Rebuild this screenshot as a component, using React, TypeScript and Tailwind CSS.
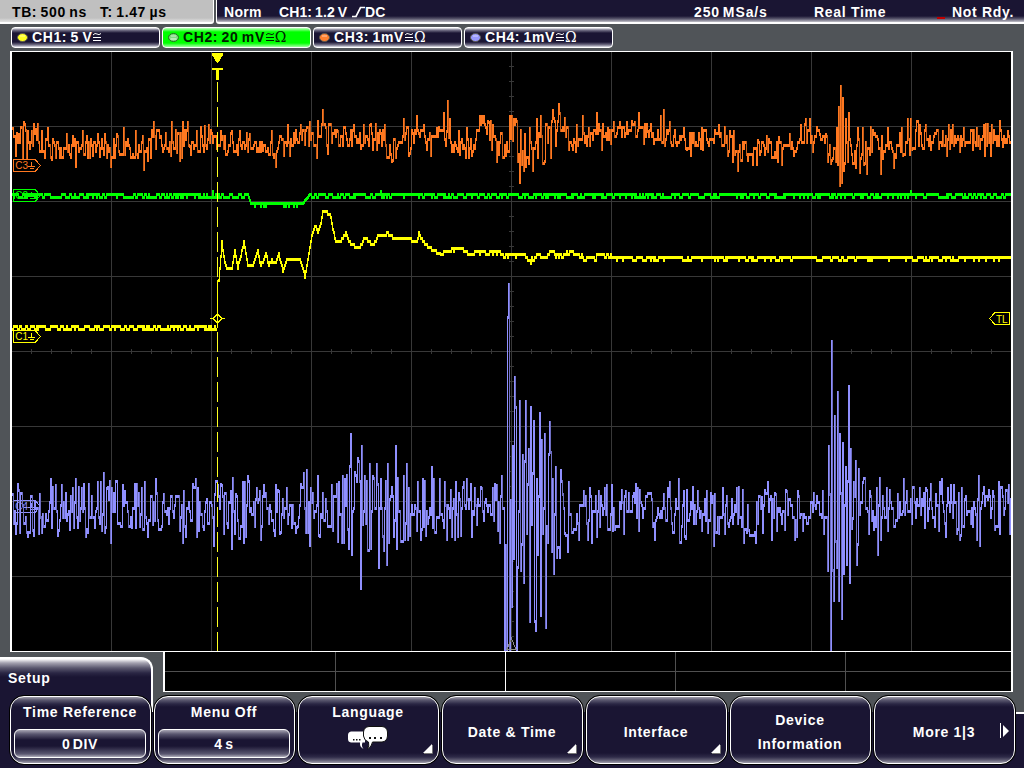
import React from "react";

type Pt = [number, number];
type Env = [number, number, number];

const LEFT = 12;
const RIGHT = 1011;

/* Small deterministic generator so every render draws the same noise. */
function makeRandom(seed: number) {
  let s = seed;
  return () => {
    s = (s * 1664525 + 1013904223) % 4294967296;
    return s / 4294967296;
  };
}

function parse(data: string): Pt[] {
  return data
    .trim()
    .split(/\s+/)
    .map((p) => p.split(",").map(Number) as Pt);
}

function lerp(points: number[][], x: number, k: number) {
  if (x <= points[0][0]) return points[0][k];
  for (let i = 1; i < points.length; i++) {
    if (x <= points[i][0]) {
      const a = points[i - 1];
      const b = points[i];
      return a[k] + ((b[k] - a[k]) * (x - a[0])) / (b[0] - a[0]);
    }
  }
  return points[points.length - 1][k];
}

/* One bar per pixel column, spanning the previous and the current sample. */
function columns(samples: number[], start: number) {
  let bright = "";
  let dim = "";
  for (let i = 0; i < samples.length; i++) {
    const prev = i ? samples[i - 1] : samples[i];
    const top = Math.min(prev, samples[i]);
    const h = Math.min(651, Math.max(prev, samples[i]) + 3) - top;
    const d = `M${start + i} ${top}h1v${h}h-1z`;
    if (h > 14 && i % 3 !== 0 && samples[i] > prev) dim += d;
    else bright += d;
  }
  return { bright, dim };
}

function noisy(env: Env[], peaks: Pt[], seed: number, gain: number) {
  const rnd = makeRandom(seed);
  const out: number[] = [];
  for (let x = LEFT; x < RIGHT; x++) {
    const c = lerp(env, x, 1);
    const a = lerp(env, x, 2);
    const r = (rnd() + rnd() - 1) * gain;
    out.push(Math.round((c + a * r) / 3) * 3);
    if (rnd() < 0.2 && out.length > 1) out[out.length - 1] = out[out.length - 2];
  }
  peaks.forEach(([x, y]) => {
    const i = x - 1 - LEFT;
    if (i >= 0 && i < out.length) out[i] = y > 560 ? y - 2 : y > lerp(env, x, 1) ? y - 3 : y;
  });
  return columns(out, LEFT);
}

const CH3_ENV: Env[] = [
  [12, 139, 15], [48, 143, 15], [58, 150, 12], [75, 150, 10], [90, 143, 9], [110, 147, 10], [150, 144, 12],
  [180, 140, 13], [205, 135, 11], [225, 141, 12], [250, 143, 9], [275, 148, 9], [300, 137, 10],
  [325, 133, 13], [345, 137, 11], [372, 134, 10], [392, 150, 9], [404, 130, 8], [412, 136, 11],
  [425, 138, 10], [440, 130, 8], [455, 144, 9], [472, 147, 9], [482, 122, 7], [492, 133, 13],
  [504, 150, 7], [511, 128, 16], [522, 150, 16], [535, 142, 20], [550, 135, 18], [560, 122, 11],
  [570, 141, 8], [590, 132, 10], [605, 132, 9], [640, 125, 8], [655, 135, 8], [680, 138, 9],
  [700, 139, 8], [715, 134, 9], [728, 145, 12], [750, 150, 9], [775, 145, 8], [795, 144, 8],
  [806, 128, 9], [820, 138, 9], [838, 146, 22], [850, 146, 26], [865, 143, 20], [875, 135, 9],
  [884, 147, 8], [900, 144, 9], [912, 134, 11], [940, 139, 9], [965, 138, 10], [980, 133, 11], [1011, 137, 10],
];

const CH3_PEAKS = parse(`
13,127 16,157 19,133 23,159 24,121 28,130 30,150 32,130 36,128 40,153 42,130 48,127 52,161 56,159 60,159 63,159 67,133
71,159 76,168 83,130 93,157 98,133 100,158 105,133 107,159 111,168 115,159 117,133 124,127 132,159 136,130
138,159 144,171 151,159 154,121 160,136 163,153 171,157 172,121 177,154 182,159 183,121 188,121 190,148 197,130 200,153
205,125 209,124 221,130 228,153 232,130 240,130 248,153 250,133 263,152 272,130 274,159 276,168 284,157 288,124
290,157 301,124 305,146 310,121 317,159 322,123 323,109 324,123 325,123 328,155 338,130 343,147 352,147 354,124
362,147 364,124 370,124 373,151 377,151 385,124 387,159 392,163 396,159 404,118 409,157 410,155 417,115
424,124 427,151 431,157 437,127 444,112 447,130 448,100 449,136 450,118 454,153 459,130 467,127 469,159 472,157
480,115 481,126 482,115 483,124 484,115 489,121 492,151 493,124 497,163 503,159 506,157 510,115 511,140 512,115 513,142 514,118 516,118
518,163 520,184 522,166 524,172 525,133 527,159 530,127 533,172 537,118 538,159 541,115 545,163 551,159
553,109 555,120 559,103 560,112 569,151 573,151 577,124 583,115 587,147 589,127 597,112 602,151 608,127 611,145
614,121 620,121 627,121 635,121 639,112 644,145 648,130 654,145 661,115 664,109 665,147 670,121 684,127
687,151 691,157 702,127 703,151 719,124 728,157 730,130 733,163 734,130 738,172 753,166 757,166 758,139
775,154 778,163 779,136 782,166 790,133 794,157 801,124 806,118 810,118 813,153 820,133 826,133 828,163
833,160 836,163 837,127 838,166 839,106 840,187 841,85 842,184 843,97 844,172 846,118 848,163 849,112
853,165 856,169 858,127 861,160 863,127 864,166 867,175 874,133 881,175 883,160 888,127 894,169 902,127 903,157
908,118 911,118 912,151 920,124 926,124 931,151 943,130 947,157 949,124 953,124 960,153 964,127 973,151
977,127 984,124 985,157 991,157 992,124 1003,148 1008,130`);

const CH4_ENV: Env[] = [
  [12, 508, 28], [100, 508, 30], [170, 508, 20], [230, 508, 30], [330, 508, 32], [355, 512, 48],
  [400, 510, 40], [440, 508, 30], [480, 504, 24], [500, 508, 34], [506, 500, 70], [545, 508, 90],
  [562, 508, 45], [575, 508, 24], [640, 507, 26], [700, 509, 28], [770, 508, 26], [820, 508, 24],
  [830, 505, 60], [850, 505, 85], [862, 505, 30], [900, 506, 26], [950, 507, 30], [1011, 508, 30],
];

const CH4_PEAKS = parse(`
13,493 16,535 28,538 33,532 39,535 40,493 51,478 52,529 56,484 59,532 62,484 73,487 74,529 76,478 78,529
82,487 86,538 95,529 98,481 101,481 102,532 104,472 106,529 107,487 111,544 112,487 123,484 125,490 132,529
136,529 142,487 145,481 148,538 153,526 156,478 164,493 180,532 183,544 184,490 186,538 196,478 197,538
198,487 199,532 214,547 215,493 218,484 222,484 224,535 228,529 231,490 232,550 235,535 236,493 243,481
244,544 245,481 246,538 248,475 257,487 260,490 261,541 264,484 274,532 276,484 279,490 280,535 287,487
292,529 297,529 304,472 307,469 310,547 311,487 318,475 320,538 332,484 333,532 339,481
342,544 343,475 344,544 345,478 349,550 351,433 352,556 358,457 359,460 360,480 361,589 362,445 363,526 365,475
370,463 371,550 373,475 377,463 379,568 381,478 383,538 387,565 388,463 389,544 394,538 396,445 397,550
404,475 405,541 407,463 408,541 409,487 417,532 418,481 421,541 423,478 432,466 433,529 434,478 440,478
444,529 445,481 447,541 452,538 455,541 456,481 458,538 464,481 467,478 472,538 475,487 477,526 482,487
493,487 497,484 498,532 500,544 502,475 505,651 506,547 507,651 508,316 509,283 510,651 511,499 512,607 513,445 514,560
515,376 516,406 517,651 518,568 520,400 521,571 523,454 524,583 525,460 526,400 527,535 529,448 530,622
531,406 532,526 533,472 535,622 536,631 537,478 538,556 540,412 541,616 542,439 543,535 545,433 546,628 548,544
550,421 551,451 552,553 553,478 554,574 556,466 557,559 560,559 561,469 563,493 565,535 568,553 569,481
579,541 584,490 588,541 590,487 592,544 597,538 599,490 605,487 607,484 612,484 613,532 624,535 626,490
638,487 639,532 655,541 664,493 668,487 670,481 679,478 680,544
681,544 684,490 685,538 698,490 702,532 707,490 714,547 715,493 719,535 723,487 725,535 737,487 744,544
749,532 756,544 762,496 768,481 772,541 776,493 777,532 787,490 795,541 797,538 798,490 803,532 823,490
824,535 828,571 829,445 830,493 831,651 832,340 833,571 834,601 835,415 837,568 838,391 839,601 840,433 842,619
843,442 844,574 846,466 847,565 848,480 849,385 850,583 851,448 852,530 853,520 854,481 856,460 857,565 863,481 869,535 870,490
877,487 878,556 881,541 887,487 888,532 898,493 904,478 907,490 920,487 925,529 926,487 936,493 939,532
940,481 942,478 946,538 948,487 951,484 954,484 957,535 960,541 962,487 977,541 979,475 980,547 993,490
999,481 1000,535 1009,484 1010,535`);

const CH1_CURVE = parse(`
218,280 219,267 221,242 224,262 226,267 231,267 234,251 237,267 243,242 247,265 252,264 257,251 260,266
265,253 268,265 271,260 274,263 278,254 282,270 286,260 299,260 301,264 304,276 310,240 314,225 317,231 320,222
322,212 326,212 330,216 332,228 335,242 339,242 342,237 345,232 350,245 353,245 358,248 364,237 372,245 377,236
387,233 393,238 400,237 413,240 416,242 418,233 423,242 428,247 440,254 447,250 460,248 467,253 477,251 487,253
497,250 503,256 513,253 523,254 528,260 540,253 546,254 550,251 560,254 570,251 583,256 607,255 623,257 635,258 650,256
660,257 1011,257`);

function digital() {
  const rnd = makeRandom(77);
  const a: number[] = [];
  let low = 0;
  for (let x = LEFT; x < 217; x++) {
    if (rnd() < 0.45) low = low ? 0 : 1;
    a.push(325 + low * 3);
  }
  const b: number[] = [];
  low = 0;
  for (let x = 218; x < RIGHT; x++) {
    if (rnd() < (low ? 0.5 : 0.2)) low = low ? 0 : 1;
    const y = lerp(CH1_CURVE, x, 1);
    b.push(x < 440 ? Math.round((y - 1) / 3) * 3 : 256 + Math.round((y - 257) / 3) * 3 + low * 3);
  }
  const c: number[] = [];
  low = 0;
  for (let x = LEFT; x < RIGHT; x++) {
    if (rnd() < (low ? 0.45 : 0.28)) low = low ? 0 : 1;
    const base = lerp([[12, 193], [247, 193], [250, 202], [302, 202], [309, 193], [1011, 193]], x, 1);
    const inDip = x > 247 && x < 309;
    c.push(Math.round(base) + (inDip ? (rnd() < 0.12 ? 3 : 0) : low * 3));
  }
  [212, 380, 910].forEach((x) => (c[x - LEFT] = 190));
  return { ch1a: columns(a, LEFT), ch1b: columns(b, 218), ch2: columns(c, LEFT) };
}

const ch3 = noisy(CH3_ENV, CH3_PEAKS, 11, 1.5);
const ch4 = noisy(CH4_ENV, CH4_PEAKS, 29, 1.1);
const { ch1a, ch1b, ch2 } = digital();

function Trace({ d, color, dark }: { d: { bright: string; dim: string }; color: string; dark: string }) {
  return (
    <>
      <path d={d.dim} fill={dark} />
      <path d={d.bright} fill={color} />
    </>
  );
}

function Tag({ y, name, color }: { y: number; name: string; color: string }) {
  return (
    <g transform={`translate(13 ${y})`} stroke={color} fill="none">
      <path d="M.5 .5H22L27.5 6.5L22 12.5H.5z" />
      <text x="2.300" y="10" fill={color} stroke="none" fontSize="10" className="font-['Liberation_Sans',sans-serif]">
        {name}
      </text>
      <path d="M18.500 2.500V7M15 7.500H22M16.500 9.500H20.500" />
    </g>
  );
}

const range = (a: number, b: number, s: number) => {
  const r: number[] = [];
  for (let i = a; i < b; i += s) r.push(i);
  return r;
};

function Screen() {
  return (
    <svg width="1000" height="599" viewBox="12 52 1000 599" className="block" shapeRendering="crispEdges">
      <g fill="#383838">
        {range(111, 1000, 100).map((x) => (
          <rect key={x} x={x} y="52" width="1" height="599" />
        ))}
        {range(126, 640, 75).map((y) => (
          <rect key={y} x="12" y={y} width="1000" height="1" />
        ))}
        {range(31, 1010, 20).map((x) => (
          <rect key={x} x={x} y="349" width="1" height="5" />
        ))}
        {range(66, 650, 15).map((y) => (
          <rect key={y} x="509" y={y} width="5" height="1" />
        ))}
      </g>
      <Tag y={159} name="C3" color="#ff7820" />
      <Tag y={189} name="C2" color="#00ff00" />
      <Tag y={330} name="C1" color="#ffff00" />
      <Tag y={500} name="C4" color="#9090ff" />
      <Trace d={ch4} color="#9090ff" dark="#6e6ec2" />
      <Trace d={ch3} color="#ff7820" dark="#c45c18" />
      <Trace d={ch2} color="#00ff00" dark="#00aa00" />
      <Trace d={ch1a} color="#ffff00" dark="#b8b800" />
      <Trace d={ch1b} color="#ffff00" dark="#b8b800" />
      <path d="M217.500 82V651" stroke="#ffff20" strokeDasharray="20 5" />
      <path d="M217 280h1v48h-1z" fill="#ffff00" />
      <path d="M212 53h11v2l-5 8h-1l-5-8z" fill="#ffff00" />
      <path d="M212 68h11v2h-4v10h-3v-10h-4z" fill="#ffff00" />
      <path d="M210 318.500H213M222 318.500H225M213 318.500L217.500 314L222 318.500L217.500 323z" fill="none" stroke="#ffff00" />
      <path d="M507 649.500L511.500 638.500L516 649.500z" fill="none" stroke="#8c8c8c" />
      <g stroke="#ffff00" fill="none">
        <path d="M1009.500 312.500H995L989.500 318.500L995 324.500H1009.500z" />
        <text x="996" y="322.500" fill="#ffff00" stroke="none" fontSize="10" className="font-['Liberation_Sans',sans-serif]">
          TL
        </text>
      </g>
    </svg>
  );
}

function Channel({
  name,
  value,
  dot,
  ohm,
  active,
}: {
  name: string;
  value: string;
  dot: string;
  ohm?: boolean;
  active?: boolean;
}) {
  return (
    <div
      className={
        "flex h-[21px] w-[149px] items-center rounded-[4px] border border-white pl-[5px] " +
        (active
          ? "bg-[linear-gradient(#c0ffc0,#00ff00_4px,#00ff00_15px,#a0ffa0)] text-[#002000]"
          : "bg-[linear-gradient(#f0f0f4,#77748a_2px,#1a1533_5px,#1a1533_14px,#77748a_17px,#e0e0e8)] text-white")
      }
    >
      <svg width="11" height="9" className="shrink-0">
        <ellipse cx="5.500" cy="4.500" rx="5" ry="4" fill={dot} stroke={active ? "#207020" : "#5c5a50"} />
        <path d="M3 3h5" stroke="#fff" strokeOpacity="0.6" />
        {active && <path d="M2.500 6h6" stroke="#e8ffe8" />}
      </svg>
      <span className="ml-[4px] whitespace-pre text-[14px] font-bold leading-[19px] tracking-[0.6px] [word-spacing:-1px]">
        {name}: {value}
      </span>
      <svg width="9" height="11" className="ml-px shrink-0">
        <path d="M0 3Q2 .5 4 2T8 1.500M0 5.500H8M0 8.500H8" fill="none" stroke="currentColor" />
      </svg>
      {ohm && <span className="font-['DejaVu_Serif',serif] text-[14px] leading-[19px]">Ω</span>}
    </div>
  );
}

function SoftKey({ children, more, next }: { children: React.ReactNode; more?: boolean; next?: boolean }) {
  return (
    <div className="relative flex h-[70px] w-[143px] flex-col items-center rounded-[15px] border border-black bg-black">
      <div className="flex h-[68px] w-[141px] flex-col items-center rounded-[14px] border border-white bg-[linear-gradient(#a09eac,#5c5970_3px,#2a2644_7px,#1a1533_10px,#1a1533_56px,#2e2a48_60px,#5c5970_63px,#a09eac)] pr-px text-[14px] font-bold leading-6 tracking-[0.7px] text-white">
        {children}
      </div>
      {more && (
        <svg width="10" height="10" className="absolute bottom-[10px] right-[6px]">
          <path d="M9 0V9H0z" fill="#fff" />
          <path d="M9.500 1V9.500H1" fill="none" stroke="#777" />
        </svg>
      )}
      {next && (
        <svg width="10" height="16" className="absolute right-[5px] top-[27px]">
          <path d="M.5 0V15" stroke="#fff" />
          <path d="M3 2L9 8L3 14z" fill="#fff" />
        </svg>
      )}
    </div>
  );
}

function ValueKey({ label, value }: { label: string; value: string }) {
  return (
    <SoftKey>
      <span className="mt-[3px]">{label}</span>
      <span className="mt-[5px] h-[29px] w-[132px] rounded-[6px] border border-white bg-[linear-gradient(#a8a6b4,#5a5770_4px,#1a1533_10px,#1a1533_16px,#5a5770_24px,#b0aebb)] text-center leading-[28px] tracking-[0.6px] [word-spacing:-2px]">
        {value}
      </span>
    </SoftKey>
  );
}

function Bubbles() {
  return (
    <svg width="42" height="26" viewBox="0 0 42 26" className="mt-px">
      <path d="M4 6.500H18V17.500H15.500Q14 21 16.500 24Q12.500 22 13 17.500H4Q1 17 1 14V10Q1 7 4 6.500z" fill="#fff" />
      <path
        d="M22 1.500H35Q40 2 40.500 7V11Q40 16.500 35 17H25.500Q25 21.500 20.500 24Q22.500 20.500 21.500 17Q17 15.500 16.500 11V7Q17 2 22 1.500z"
        fill="#fff"
        stroke="#111"
      />
      <path d="M6 14h1.500v1.500H6zM9 14h1.500v1.500H9zM12 14h1.500v1.500H12zM22 12h2v2h-2zM27 12h2v2h-2zM33 12h2v2h-2z" fill="#111" />
    </svg>
  );
}

export default function App() {
  return (
    <div className="flex h-[768px] w-[1024px] flex-col overflow-hidden bg-[#505458] font-['Liberation_Sans',Arial,sans-serif]">
      <header className="flex h-6 shrink-0 gap-[2px] whitespace-pre text-[14px] font-bold leading-6">
        <div className="flex w-[214px] rounded-br-[3px] border-b-2 border-r border-white bg-[linear-gradient(#c0c0c0_18px,#e4e4e4)] pl-3 tracking-[0.6px] text-black [word-spacing:-1px]">
          <span className="w-[88px]">TB: 500 ns</span>
          <span>T: 1.47 µs</span>
        </div>
        <div className="flex flex-1 rounded-bl-[3px] border-b-2 border-l border-white bg-[linear-gradient(#1a1533_16px,#5d5a70_19px,#c4c3cb)] pl-[7px] tracking-[0.5px] text-white">
          <span className="w-[55px] tracking-[0.3px]">Norm</span>
          <span className="w-[73px] tracking-[0.1px] [word-spacing:-1px]">CH1: 1.2 V</span>
          <svg width="13" height="24">
            <path d="M0 16.500H4L8.500 7.500H13" fill="none" stroke="#fff" strokeWidth="1.700" />
          </svg>
          <span className="w-[329px] tracking-[0.2px]">DC</span>
          <span className="w-[120px] tracking-[0.9px] [word-spacing:-2px]">250 MSa/s</span>
          <span className="w-[123px] tracking-[0.7px]">Real Time</span>
          <span className="mr-[7px] mt-[17px] h-[2px] w-2 bg-[#c00000]" />
          <span className="flex-1 tracking-[0.7px]">Not Rdy.</span>
        </div>
      </header>
      <div className="flex h-[27px] shrink-0 gap-[2px] pl-[11px] pt-[3px]">
        <Channel name="CH1" value="5 V" dot="#ffff20" />
        <Channel name="CH2" value="20 mV" dot="#80d880" ohm active />
        <Channel name="CH3" value="1mV" dot="#ff8030" ohm />
        <Channel name="CH4" value="1mV" dot="#9898ff" ohm />
      </div>
      <main className="ml-[10px] h-[601px] w-[1003px] shrink-0 overflow-hidden border-y border-l-2 border-r-2 border-white bg-black">
        <Screen />
      </main>
      <div className="flex h-[116px] shrink-0 flex-col">
        <div className="flex h-[39px] shrink-0 justify-between pr-[11px]">
          <div className="mt-[5px] h-[55px] w-[153px] rounded-tr-[12px] border-r-2 border-t-2 border-white bg-[linear-gradient(#ffffff,#a3a1af_4px,#5a576e_9px,#2a2644_14px,#1a1533_18px)] pl-2 pt-[7px] text-[14px] font-bold leading-6 tracking-[0.7px] text-white">
            Setup
          </div>
          <svg width="850" height="40" className="block" shapeRendering="crispEdges">
            <rect width="850" height="40" fill="#fff" />
            <rect x="2" width="846" height="39" fill="#000" />
            <path d="M2 19.500H848M172.500 0V39M512.500 0V39M682.500 0V39" stroke="#505050" />
            <path d="M342.500 0V39" stroke="#fff" />
          </svg>
        </div>
        <div className="mt-[21px] h-[56px] bg-[linear-gradient(90deg,#1a1533_1014px,#ffffff_1014px)] bg-[length:100%_2px] bg-no-repeat">
          <div className="h-[56px] w-full bg-[linear-gradient(#1a1533,#1a1533)] bg-[length:100%_54px] bg-bottom bg-no-repeat">
            <nav className="relative flex -translate-y-[17px] gap-px pl-[9px]">
              <ValueKey label="Time Reference" value="0 DIV" />
              <ValueKey label="Menu Off" value="4 s" />
              <SoftKey more>
                <span className="mt-[3px]">Language</span>
                <Bubbles />
              </SoftKey>
              <SoftKey more>
                <span className="mt-[23px]">Date &amp; Time</span>
              </SoftKey>
              <SoftKey more>
                <span className="mt-[23px]">Interface</span>
              </SoftKey>
              <SoftKey>
                <span className="mt-[11px]">Device</span>
                <span>Information</span>
              </SoftKey>
              <SoftKey next>
                <span className="mt-[23px]">More 1|3</span>
              </SoftKey>
            </nav>
          </div>
        </div>
      </div>
    </div>
  );
}
